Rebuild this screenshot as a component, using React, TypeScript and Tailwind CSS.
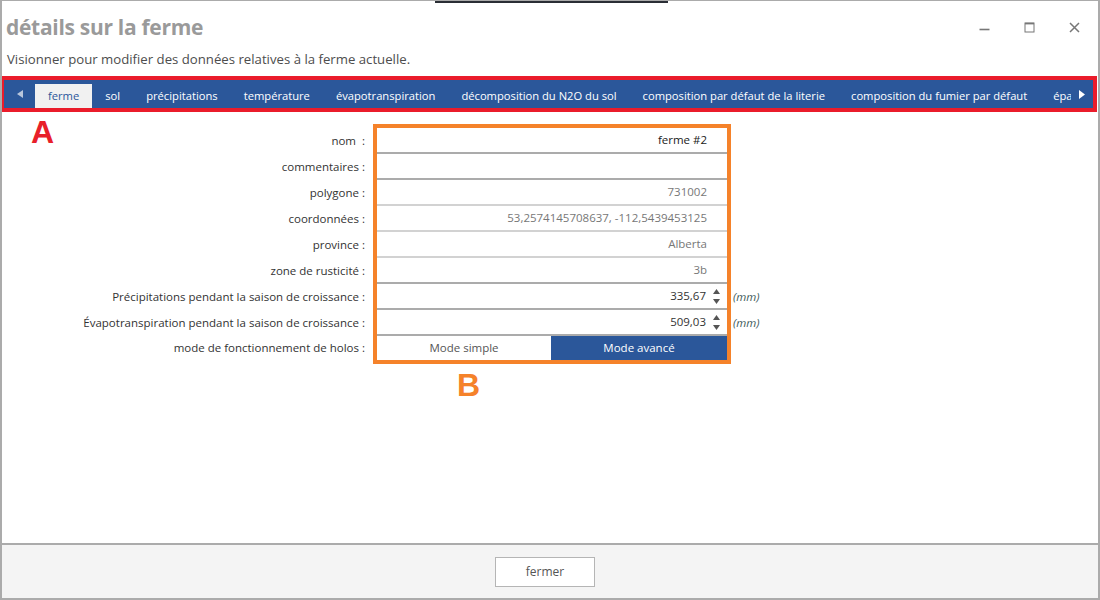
const tabs = [
  "ferme",
  "sol",
  "précipitations",
  "température",
  "évapotranspiration",
  "décomposition du N2O du sol",
  "composition par défaut de la literie",
  "composition du fumier par défaut",
  "épandage",
];

type Row = {
  label: string;
  value?: string;
  tone?: "dark" | "muted";
  line?: "dark" | "light";
  spin?: boolean;
  unit?: string;
};

const rows: Row[] = [
  { label: "nom  :", value: "ferme #2", tone: "dark", line: "dark" },
  { label: "commentaires :", value: "", line: "dark" },
  { label: "polygone :", value: "731002", tone: "muted", line: "light" },
  { label: "coordonnées :", value: "53,2574145708637, -112,5439453125", tone: "muted", line: "light" },
  { label: "province :", value: "Alberta", tone: "muted", line: "light" },
  { label: "zone de rusticité :", value: "3b", tone: "muted", line: "dark" },
  { label: "Précipitations pendant la saison de croissance :", value: "335,67", tone: "dark", line: "dark", spin: true, unit: "(mm)" },
  { label: "Évapotranspiration pendant la saison de croissance :", value: "509,03", tone: "dark", line: "dark", spin: true, unit: "(mm)" },
];

const Spinner = () => (
  <div className="flex flex-col items-center gap-[5px] ml-[7px] mr-[5px]">
    <svg width="7" height="5" viewBox="0 0 7 5">
      <path d="M3.5 0 L7 5 L0 5 Z" fill="#555" />
    </svg>
    <svg width="7" height="5" viewBox="0 0 7 5">
      <path d="M0 0 L7 0 L3.5 5 Z" fill="#555" />
    </svg>
  </div>
);

const App = () => {
  return (
    <div
      className="relative w-[1100px] h-[600px] flex flex-col bg-white border-x-2 border-t border-b-2 border-[#ababab] overflow-hidden"
      style={{ fontFamily: '"Open Sans", "Noto Sans", sans-serif' }}
    >
      <div className="absolute top-0 left-[433px] w-[233px] h-[2px] bg-[#2a2e35]" />

      {/* header */}
      <div className="flex items-start justify-between pl-[4px] pr-[18px] pt-[12px]">
        <h1 className="text-[21px] font-bold text-[#9a9a9a] leading-[28px] tracking-[-0.3px]">
          détails sur la ferme
        </h1>
        <div className="flex items-center gap-[34px] pt-[9px]">
          <svg width="11" height="11" viewBox="0 0 11 11">
            <path d="M0.5 7.5 H10.5" stroke="#777" strokeWidth="1.6" />
          </svg>
          <svg width="11" height="11" viewBox="0 0 11 11">
            <rect x="1" y="1" width="9" height="9" fill="none" stroke="#777" strokeWidth="1" />
            <path d="M1 1.6 H10" stroke="#777" strokeWidth="1.6" />
          </svg>
          <svg width="11" height="11" viewBox="0 0 11 11">
            <path d="M1 1 L10 10 M10 1 L1 10" stroke="#777" strokeWidth="1.5" />
          </svg>
        </div>
      </div>
      <p className="pl-[5px] mt-[9px] text-[13.2px] text-[#4d4d4d] leading-[18px]">
        Visionner pour modifier des données relatives à la ferme actuelle.
      </p>

      {/* tab bar */}
      <div className="mt-[8px] -ml-[2px] mr-[1px] border-4 border-[#ea1c2b] bg-[#2b579a] h-[36px] flex items-end">
        <div className="w-[31px] h-full flex items-center justify-center">
          <svg width="6" height="8" viewBox="0 0 6 8">
            <path d="M6 0 L6 8 L0 4 Z" fill="#b9c6dc" />
          </svg>
        </div>
        <div className="flex-1 flex items-end overflow-hidden whitespace-nowrap">
          {tabs.map((t, i) => (
            <div
              key={t}
              className={
                i === 0
                  ? "h-[24px] px-[13px] flex items-center text-[11.2px] bg-[#f1f1f1] text-[#2b579a] shrink-0"
                  : "h-[24px] px-[13px] flex items-center text-[11.2px] text-white shrink-0"
              }
            >
              {t}
            </div>
          ))}
        </div>
        <div className="w-[22px] h-full flex items-center justify-center">
          <svg width="6" height="9" viewBox="0 0 6 9">
            <path d="M0 0 L6 4.5 L0 9 Z" fill="#ffffff" />
          </svg>
        </div>
      </div>

      {/* content */}
      <div className="relative flex-1 pt-[12px]">
        <span
          className="absolute left-[29px] top-[4px] text-[32px] font-bold text-[#e8202a] leading-none"
          style={{ fontFamily: '"Liberation Sans", sans-serif' }}
        >
          A
        </span>

        <div className="flex text-[11.5px]">
          {/* labels */}
          <div className="w-[363px] pt-[4px] text-[#333]">
            {rows.map((r) => (
              <div key={r.label} className="h-[26px] flex items-center justify-end whitespace-pre">
                {r.label}
              </div>
            ))}
            <div className="h-[24px] flex items-center justify-end">
              mode de fonctionnement de holos :
            </div>
          </div>

          {/* fields */}
          <div className="ml-[8px] w-[358px] border-4 border-[#f5822a] flex flex-col">
            {rows.map((r) => (
              <div
                key={r.label}
                className={
                  r.line === "dark"
                    ? "h-[26px] flex items-center justify-end border-b-2 border-[#ababab] pr-[20px]"
                    : "h-[26px] flex items-center justify-end border-b-2 border-[#d2d2d2] pr-[20px]"
                }
              >
                {r.spin ? (
                  <div className="flex items-center -mr-[20px] pr-[2px]">
                    <span className="text-[#333]">{r.value}</span>
                    <Spinner />
                  </div>
                ) : (
                  <span className={r.tone === "dark" ? "text-[#1a1a1a]" : "text-[#777]"}>{r.value}</span>
                )}
              </div>
            ))}
            <div className="h-[24px] flex">
              <div className="flex-1 flex items-center justify-center text-[#555] bg-white">
                Mode simple
              </div>
              <div className="w-[176px] flex items-center justify-center text-white bg-[#2b579a]">
                Mode avancé
              </div>
            </div>
          </div>

          {/* units */}
          <div className="pt-[4px] pl-[2px] text-[#3f5b5b] italic">
            {rows.map((r) => (
              <div key={r.label} className="h-[26px] flex items-center">
                {r.unit ?? ""}
              </div>
            ))}
          </div>
        </div>

        <div
          className="ml-[455px] mt-[5px] text-[32px] font-bold text-[#f5822a] leading-none"
          style={{ fontFamily: '"Liberation Sans", sans-serif' }}
        >
          B
        </div>
      </div>

      {/* footer */}
      <div className="h-[55px] border-t-2 border-[#ababab] bg-[#f4f4f4] flex items-center justify-center">
        <button className="mr-[10px] w-[100px] h-[30px] bg-white border border-[#b5b5b5] text-[12px] text-[#555]">
          fermer
        </button>
      </div>
    </div>
  );
};

export default App;
